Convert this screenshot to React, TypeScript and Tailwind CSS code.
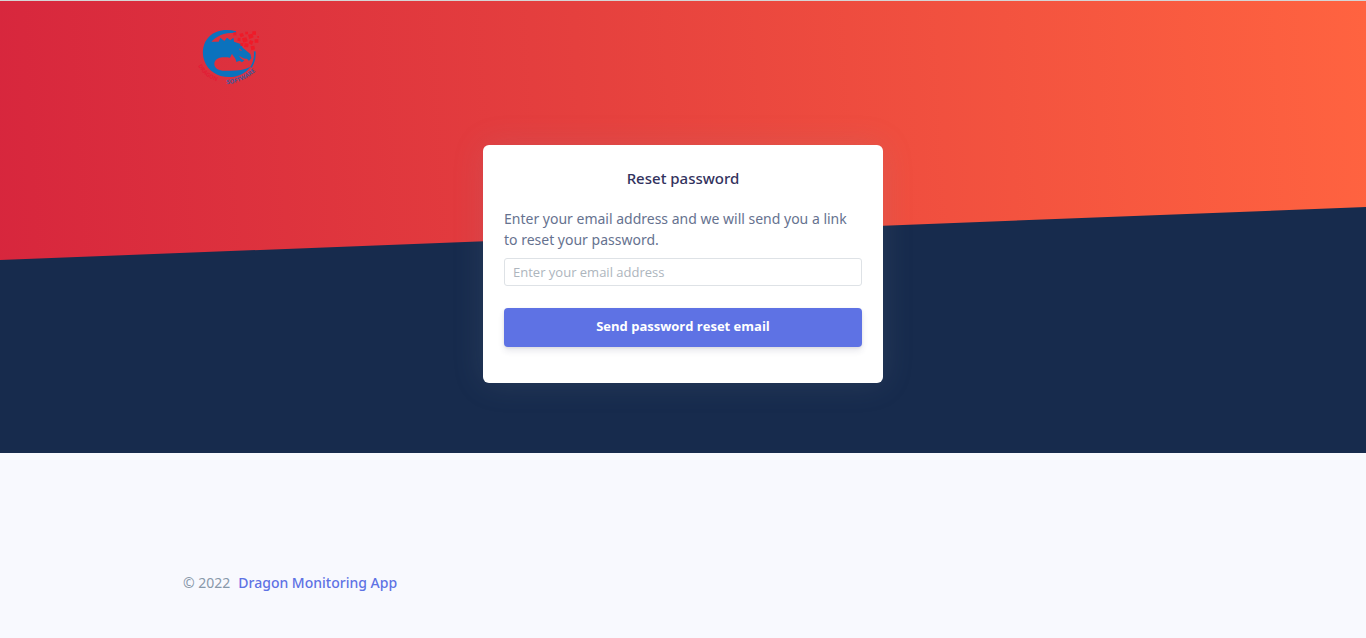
import React from "react";

function DragonLogo() {
  return (
    <svg viewBox="-21 0 240 210" className="h-[70px] w-20" role="img" aria-label="Dragon Software">
      <defs>
        <path id="ring-left" d="M24 134 Q46 176 104 187" />
        <path id="ring-right" d="M110 190 Q172 184 214 132" />
      </defs>
      <path
        fill="#0b72bd"
        d="M138 31 C108 22 76 28 57 47 C39 65 34 93 43 119 C53 148 82 168 117 168 C145 168 166 157 182 137 C163 146 144 149 122 149 L97 149 C82 148 72 139 73 127 C75 111 94 106 120 110 L126 98 C131 108 138 111 139 123 L149 119 L156 124 L163 118 C157 116 151 112 147 104 C157 112 165 113 171 113 L177 120 L184 111 L181 99 L158 80 L154 70 L132 62 L130 50 L121 58 L111 50 L103 60 L91 50 L86 62 L64 62 C80 44 104 34 138 35 Z"
      />
      <path fill="#df323d" d="M147 82 L157 90 L149 88 Z" />
      <path fill="none" stroke="#0b72bd" strokeWidth="5" d="M194 91 Q197 116 183 139" />
      <g fill="#f31625" opacity="0.85">
        <path d="M130 34h9v9h-9z M148 39l10-3 4 9-10 4z M166 32h8v8h-8z M187 31h11v10h-11z" />
        <path d="M144 50l8 2-1 9-9-2z M156 52l13-3 4 12-13 4z M174 41l13-3 4 11-13 5z M194 55h11v10h-11z" />
        <path d="M151 66h9v9h-9z M164 66l12 2-2 11-12-1z M180 57l10 4-4 11-10-5z M182 76l11-2 2 11-11 3z M202 45h5v5h-5z" />
      </g>
      <text fill="#e31c35" fontSize="17" fontWeight="700" fontFamily="Open Sans, sans-serif">
        <textPath href="#ring-left">DRAGON</textPath>
      </text>
      <text fill="#405a9c" fontSize="18" fontWeight="700" fontFamily="Open Sans, sans-serif">
        <textPath href="#ring-right">SOFTWARE</textPath>
      </text>
    </svg>
  );
}

export default function App() {
  return (
    <div className="flex min-h-screen flex-col bg-[#f8f9fe] font-['Noto_Sans','Open_Sans',sans-serif] text-sm text-[#66728f]">
      <div className="relative isolate border-t border-[#d5d5d5] bg-[linear-gradient(87deg,#d7263d_0%,#e5403e_43%,#ff6340_100%)] pb-[70px]">
        <div className="absolute inset-x-0 bottom-0 -z-10 h-[246px] bg-[#172b4d] [clip-path:polygon(0_53px,100%_0,100%_100%,0_100%)]" />
        <header className="mx-auto max-w-[1000px] pt-5">
          <a href="#" className="inline-block align-top">
            <DragonLogo />
          </a>
        </header>
        <main className="mx-auto mt-[54px] w-full max-w-[400px] rounded-md bg-white px-[21px] pt-[22px] pb-9 shadow-[0_0_32px_rgba(136,152,170,0.15)]">
          <h1 className="text-center text-[15px] leading-[22px] font-medium text-[#32325d]">Reset password</h1>
          <form className="mt-[19px]" onSubmit={(e) => e.preventDefault()}>
            <label htmlFor="email" className="block leading-[21px]">
              Enter your email address and we will send you a link to reset your password.
            </label>
            <input
              id="email"
              type="email"
              placeholder="Enter your email address"
              className="mt-2 block h-7 w-full rounded-[3px] border border-[#dee2e6] bg-white px-2 font-['Open_Sans',sans-serif] text-[13px] outline-none placeholder:text-[#adb5bd]"
            />
            <button
              type="submit"
              className="mt-[22px] block h-[39px] w-full rounded bg-[#5e72e4] pb-0.5 font-['Open_Sans',sans-serif] text-[13px] font-bold text-white shadow-[0_4px_6px_rgba(50,50,93,0.11),0_1px_3px_rgba(0,0,0,0.08)]"
            >
              Send password reset email
            </button>
          </form>
        </main>
      </div>
      <footer className="mx-auto w-full max-w-[1000px] pt-[119px] pb-11 leading-[21px] text-[#8898aa]">
        © 2022
        <a href="#" className="ml-2 font-medium text-[#5e72e4]">
          Dragon Monitoring App
        </a>
      </footer>
    </div>
  );
}
